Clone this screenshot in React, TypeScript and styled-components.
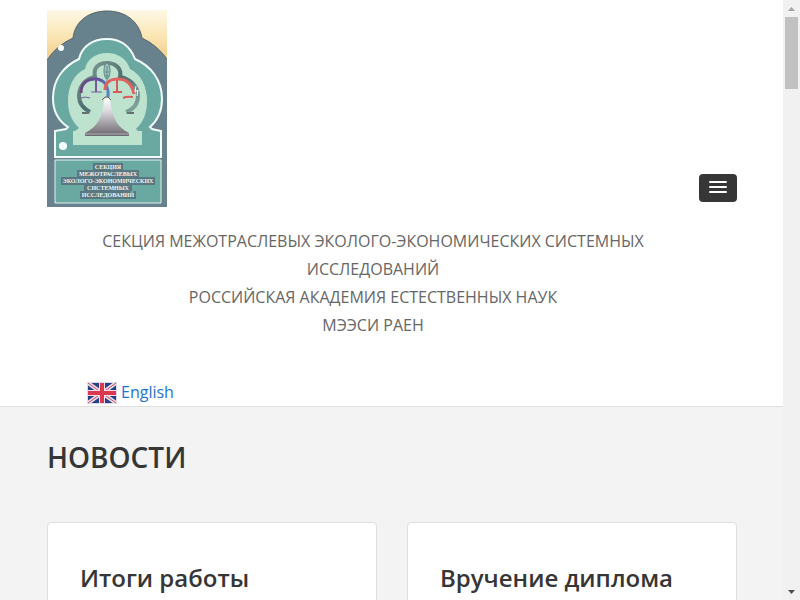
import React from "react";
import styled, { createGlobalStyle } from "styled-components";

const GlobalStyle = createGlobalStyle`
  * { box-sizing: border-box; }
  body {
    margin: 0;
    overflow: hidden;
    background: #fff;
    color: #666;
    font: 400 16px/28px "Open Sans", sans-serif;
  }
`;

const Window = styled.div`
  display: grid;
  grid-template-columns: minmax(0, 1fr) 17px;
  height: 100vh;
`;

const Page = styled.div`
  display: flex;
  flex-direction: column;
  overflow: hidden;
`;

const Header = styled.header`
  display: flex;
  flex: none;
  align-items: flex-start;
  padding: 10px 46px 0 47px;
  border-bottom: 1px solid #dfdfdf;
`;

const Brand = styled.div`
  flex: 1;
  min-width: 0;
`;

const LogoLink = styled.a`
  display: block;
  width: 120px;
`;

const LogoArt = styled.svg`
  display: block;
  width: 120px;
  height: 197px;
`;

const LogoText = styled.text`
  fill: #eef5f3;
  font: 700 6px "Liberation Serif", serif;
  text-anchor: middle;
`;

const Society = styled.p`
  margin: 20px 0 39px;
  text-align: center;
`;

const LanguageLink = styled.a`
  display: flex;
  align-items: center;
  gap: 4px;
  width: max-content;
  margin-left: 40px;
  color: #1e73d2;
  text-decoration: none;
`;

const Flag = styled.svg`
  width: 30px;
  height: 22px;
  margin-top: 2px;
`;

const MenuButton = styled.button`
  display: flex;
  flex-direction: column;
  align-items: center;
  gap: 3px;
  width: 38px;
  height: 28px;
  margin-top: 164px;
  padding: 7px 0;
  border: 0;
  border-radius: 4px;
  background: #363636;
`;

const MenuBar = styled.span`
  width: 18px;
  height: 2px;
  border-radius: 1px;
  background: #fff;
`;

const News = styled.main`
  flex: 1 0 auto;
  padding: 30px 46px 0 47px;
  background: #f3f3f3;
`;

const SectionTitle = styled.h2`
  margin: 0 0 45px;
  color: #363636;
  font-size: 28px;
  font-weight: 600;
  line-height: 40px;
`;

const Cards = styled.div`
  display: grid;
  grid-template-columns: repeat(2, minmax(0, 1fr));
  gap: 30px;
`;

const Card = styled.article`
  min-height: 240px;
  padding: 38px 32px;
  border: 1px solid #dfdfdf;
  border-radius: 4px;
  background: #fff;
`;

const CardTitle = styled.h3`
  margin: 0;
  color: #363636;
  font-size: 24px;
  font-weight: 600;
  line-height: 34px;
`;

const ScrollTrack = styled.div`
  display: flex;
  flex-direction: column;
  align-items: center;
  background: #f1f1f1;
`;

const ScrollButton = styled.button`
  display: flex;
  align-items: center;
  justify-content: center;
  width: 17px;
  height: 17px;
  padding: 0;
  border: 0;
  background: transparent;
`;

const ScrollThumb = styled.div`
  width: 13px;
  height: 72px;
  margin-bottom: auto;
  background: #c1c1c1;
`;

const logoLines = [
  { text: "СЕКЦИЯ", y: 159, half: 15 },
  { text: "МЕЖОТРАСЛЕВЫХ", y: 166, half: 31 },
  { text: "ЭКОЛОГО-ЭКОНОМИЧЕСКИХ", y: 173, half: 47 },
  { text: "СИСТЕМНЫХ", y: 180, half: 24 },
  { text: "ИССЛЕДОВАНИЙ", y: 187, half: 28 },
];

function Logo() {
  return (
    <LogoArt viewBox="0 0 120 197" role="img" aria-label="МЭЭСИ РАЕН">
      <defs>
        <linearGradient id="sky" x1="0" y1="0" x2="0" y2="1">
          <stop offset="0" stopColor="#fdf8e6" />
          <stop offset="0.5" stopColor="#fbe6b4" />
          <stop offset="1" stopColor="#efc985" />
        </linearGradient>
        <linearGradient id="spire" x1="0" y1="0" x2="0" y2="1">
          <stop offset="0" stopColor="#ffffff" />
          <stop offset="0.35" stopColor="#dddcdf" />
          <stop offset="1" stopColor="#77737b" />
        </linearGradient>
        <linearGradient id="ring" x1="0" y1="0" x2="1" y2="1">
          <stop offset="0" stopColor="#8aa49c" />
          <stop offset="0.5" stopColor="#4e6d70" />
          <stop offset="1" stopColor="#86aaa0" />
        </linearGradient>
        <linearGradient id="violet" x1="0" y1="0" x2="1" y2="0">
          <stop offset="0" stopColor="#6c4a80" />
          <stop offset="0.7" stopColor="#62539f" />
          <stop offset="1" stopColor="#5a83c5" />
        </linearGradient>
      </defs>
      <rect width="120" height="52" fill="url(#sky)" />
      <path d="M0 197V50Q10 35 26 28C28 11 42 1 60 1S92 11 95 28Q110 35 120 49V197Z" fill="#68828d" />
      <path d="M0 50Q10 35 26 28C28 11 42 1 60 1S92 11 95 28Q110 35 120 49" fill="none" stroke="#56666f" strokeWidth="1" />
      <path
        d="M8 147V121L19 119L21 117C10 110 6 99 6 88C6 69 17 56 32 49C35 36 46 29 60 29S83 36 88 49C104 56 115 70 115 89C115 100 111 110 103 117L105 119L114 121V147Z"
        fill="#69a9a1" stroke="#f1fbfa" strokeWidth="2"
      />
      <path
        d="M26 135V121H28L32 118C24 110 21 102 21 91C21 76 27 64 38 59C40 49 49 43 60 43S80 49 83 59C94 64 100 77 100 90C100 103 97 111 89 119L91 121H95V135Z"
        fill="#bde3cf"
      />
      <path
        d="M43 102C35 98 32 92 32 86C32 76 38 69 48 67C46 58 51 53 60 53S75 59 73 67C84 69 91 77 91 86C91 93 87 99 79 102"
        fill="none" stroke="url(#ring)" strokeWidth="4"
      />
      <path d="M35 103H42M80 103H87" stroke="#66716f" strokeWidth="2" />
      <ellipse cx="60" cy="61" rx="3" ry="8" fill="#9fc3bb" stroke="#5f8888" />
      <path d="M60 56V75M58 62H62M58 66H62" stroke="#66898a" strokeWidth="1" />
      <path d="M34 83C34 73 40 69 48 69C58 69 62 77 61 87" fill="none" stroke="url(#violet)" strokeWidth="3" />
      <path d="M58 80C58 72 64 69 71 69C80 69 85 74 87 84" fill="none" stroke="#de6260" strokeWidth="3" />
      <path d="M49 70V82" stroke="#765b99" strokeWidth="2" />
      <path d="M44 82H55M34 88Q38 86 43 88" fill="none" stroke="#765b99" strokeWidth="1" />
      <path d="M70 70V82" stroke="#d95a5a" strokeWidth="2" />
      <path d="M66 82H75M76 88Q80 86 86 87" fill="none" stroke="#d95a5a" strokeWidth="2" />
      <path d="M57 90C56 107 50 117 38 123H82C70 117 65 107 63 90Q60 86 57 90Z" fill="url(#spire)" />
      <path d="M55 90L58 87H61L64 90" fill="none" stroke="#77605f" strokeWidth="1" />
      <path d="M38 123H82V126H38Z" fill="#6a6b70" />
      <path d="M38 124H82" stroke="#b8b6bb" strokeWidth="1" />
      <path d="M89 76L88 82L91 80L90 86" fill="none" stroke="#ffffff" strokeWidth="1" />
      <circle cx="14" cy="38" r="3" fill="#fff" />
      <circle cx="16" cy="136" r="4" fill="#f7ffff" />
      <path d="M8 150H114V193H8Z" fill="#69a9a1" stroke="#e2f2f1" strokeWidth="1" />
      {logoLines.map(({ text, y, half }) => (
        <React.Fragment key={text}>
          <rect x={61 - half} y={y - 6} width={half * 2} height="8" fill="#597780" />
          <LogoText x="61" y={y}>{text}</LogoText>
        </React.Fragment>
      ))}
    </LogoArt>
  );
}

function BritishFlag() {
  return (
    <Flag viewBox="0 0 30 22" aria-hidden="true">
      <rect width="30" height="22" fill="#d8dce6" />
      <rect x="1" y="1" width="28" height="20" fill="#263f86" />
      <path d="M1 1L29 21M29 1L1 21" stroke="#e6dfea" strokeWidth="4" />
      <path d="M1 1L29 21M29 1L1 21" stroke="#d9485f" strokeWidth="1" />
      <path d="M15 1V21M1 11H29" stroke="#f3dfe6" strokeWidth="6" />
      <path d="M15 1V21M1 11H29" stroke="#dc3850" strokeWidth="4" />
    </Flag>
  );
}

export default function App() {
  return (
    <>
      <GlobalStyle />
      <Window>
        <Page>
          <Header>
            <Brand>
              <LogoLink href="#"><Logo /></LogoLink>
              <Society>
                СЕКЦИЯ МЕЖОТРАСЛЕВЫХ ЭКОЛОГО-ЭКОНОМИЧЕСКИХ СИСТЕМНЫХ ИССЛЕДОВАНИЙ
                <br />РОССИЙСКАЯ АКАДЕМИЯ ЕСТЕСТВЕННЫХ НАУК
                <br />МЭЭСИ РАЕН
              </Society>
              <LanguageLink href="#"><BritishFlag />English</LanguageLink>
            </Brand>
            <MenuButton type="button" aria-label="Меню">
              <MenuBar /><MenuBar /><MenuBar />
            </MenuButton>
          </Header>
          <News>
            <SectionTitle>НОВОСТИ</SectionTitle>
            <Cards>
              <Card><CardTitle>Итоги работы</CardTitle></Card>
              <Card><CardTitle>Вручение диплома</CardTitle></Card>
            </Cards>
          </News>
        </Page>
        <ScrollTrack>
          <ScrollButton type="button" aria-label="Вверх">
            <svg width="7" height="4" viewBox="0 0 7 4"><path d="M0 4L3.500 0L7 4Z" fill="#a3a3a3" /></svg>
          </ScrollButton>
          <ScrollThumb />
          <ScrollButton type="button" aria-label="Вниз">
            <svg width="7" height="4" viewBox="0 0 7 4"><path d="M0 0H7L3.500 4Z" fill="#505050" /></svg>
          </ScrollButton>
        </ScrollTrack>
      </Window>
    </>
  );
}
